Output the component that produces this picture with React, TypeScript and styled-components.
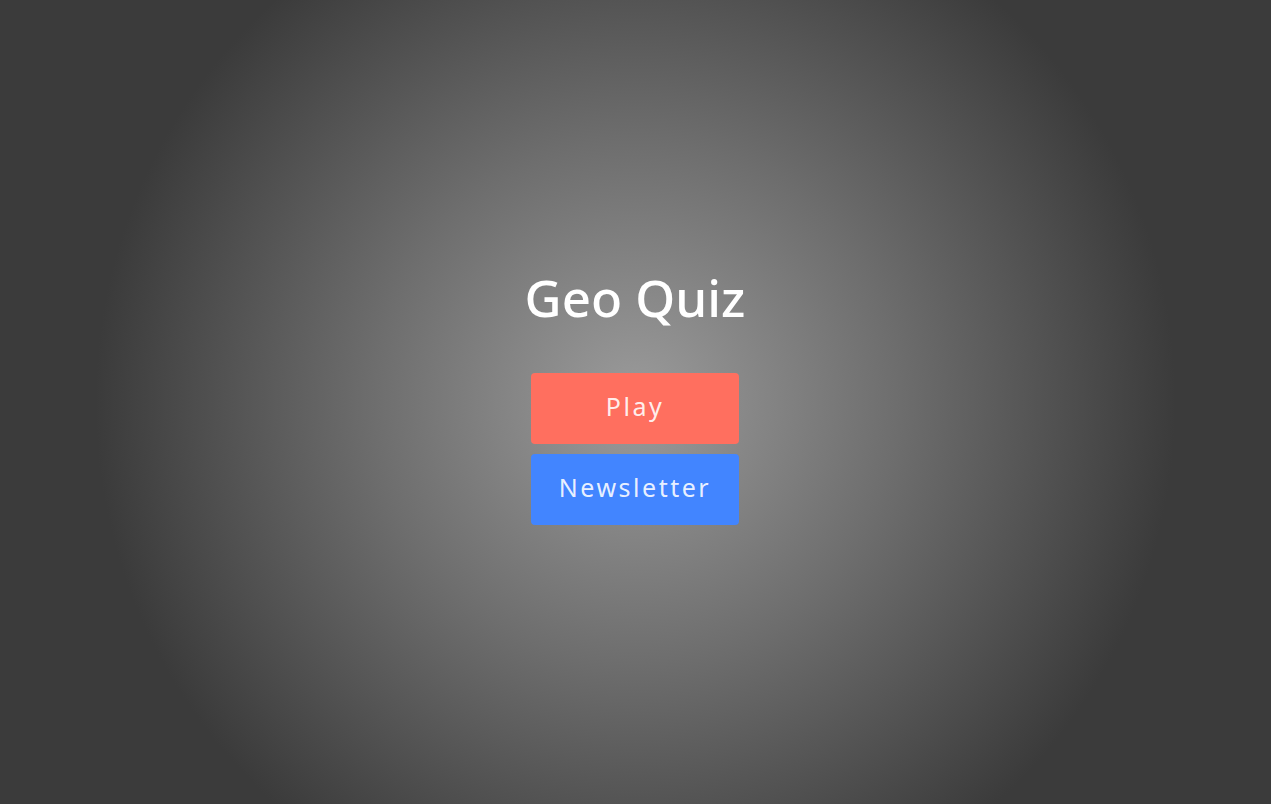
import React from "react";
import styled, { createGlobalStyle } from "styled-components";

const Global = createGlobalStyle`
  html, body { margin: 0; padding: 0; height: 100%; }
  body { font-family: "Noto Sans", "Open Sans", sans-serif; }
`;

const Page = styled.main`
  width: 100vw;
  height: 100vh;
  background: radial-gradient(circle at 50% 50%, #9b9b9b 0px, #6e6e6e 260px, #3b3b3b 540px);
  display: flex;
  flex-direction: column;
  align-items: center;
  box-sizing: border-box;
  padding: 261px 1px 0 0;
`;

const Title = styled.h1`
  margin: 0 0 40px 0;
  font-family: "Noto Sans", sans-serif;
  font-weight: 500;
  font-size: 51px;
  line-height: 72px;
  color: #ffffff;
  letter-spacing: 0px;
`;

const Menu = styled.nav`
  display: flex;
  flex-direction: column;
  gap: 10px;
`;

const MenuButton = styled.button<{ $bg: string }>`
  width: 208px;
  height: 71px;
  border: none;
  border-radius: 4px;
  background: ${(p) => p.$bg};
  color: rgba(255, 255, 255, 0.9);
  font-family: "Noto Sans", sans-serif;
  font-size: 25px;
  font-weight: 400;
  letter-spacing: 2.5px;
  cursor: pointer;
  padding: 0 0 5px 0;
`;

export default function App() {
  return (
    <>
      <Global />
      <Page>
        <Title>Geo Quiz</Title>
        <Menu>
          <MenuButton $bg="#ff6f5f">Play</MenuButton>
          <MenuButton $bg="#4285ff">Newsletter</MenuButton>
        </Menu>
      </Page>
    </>
  );
}
